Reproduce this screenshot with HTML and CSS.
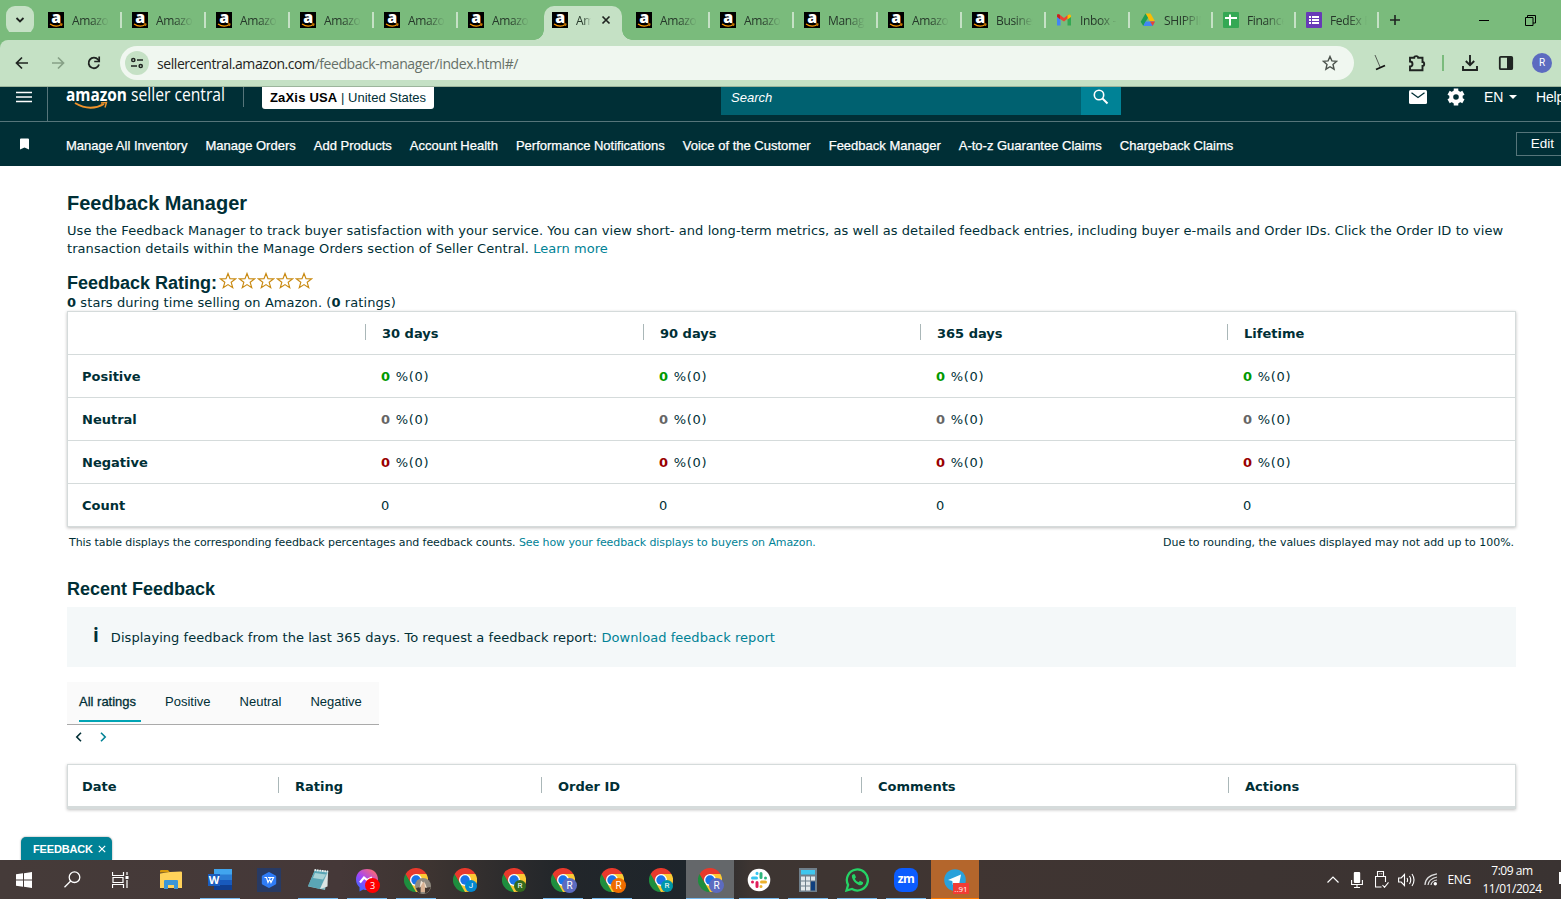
FILE: index.html
```
<!DOCTYPE html>
<html lang="en">
<head>
    <meta charset="UTF-8">
    <meta name="viewport" content="width=device-width, initial-scale=1.0">
    <title>Feedback Manager</title>
    <link rel="stylesheet" href="styles.css">
</head>
<body>

<!-- shared icons -->
<svg class="defs" width="0" height="0">
    <symbol id="amz" viewBox="0 0 16 16">
        <rect width="16" height="16" fill="#000"/>
        <text x="8" y="10.8" text-anchor="middle" font-family="Open Sans, sans-serif" font-weight="800" font-size="16" fill="#fff">a</text>
        <path d="M2 12Q8 16 13.5 12.4" fill="none" stroke="#f90" stroke-width="1.2"/>
        <path d="M11.6 11.800h2.600l-.7 2.200" fill="none" stroke="#f90" stroke-width=".8"/>
    </symbol>
    <symbol id="chrome" viewBox="0 0 24 24">
        <path d="M12 12L1.6 6A12 12 0 0 1 22.4 6z" fill="#e8392c"/>
        <path d="M12 12L22.4 6A12 12 0 0 1 12 24z" fill="#fcc934"/>
        <path d="M12 12L12 24A12 12 0 0 1 1.6 6z" fill="#1e8e3e"/>
        <path d="M12 6h10.4l-5.2 9z" fill="#fcc934"/>
        <path d="M17.2 15L12 24L8 17z" fill="#fcc934"/>
        <path d="M1.6 6L6.8 15l5.2 3V12z" fill="#1e8e3e"/>
        <path d="M1.6 6h20.8H12L6.8 15z" fill="#e8392c"/>
        <circle cx="12" cy="12" r="6" fill="#fff"/>
        <circle cx="12" cy="12" r="4.7" fill="#1a73e8"/>
    </symbol>
    <symbol id="star" viewBox="0 0 18 18">
        <path d="M9 1.500l2 5.200 5.500.2-4.300 3.400 1.500 5.400L9 12.600l-4.700 3.100 1.500-5.400L1.500 6.900 7 6.700z" fill="none" stroke="#c98a12" stroke-width="1.200"/>
    </symbol>
</svg>

<div class="tabstrip">
    <button class="tab-search"><svg width="12" height="12" viewBox="0 0 12 12"><path d="M2.5 4L6 7.5 9.5 4" fill="none" stroke="#1f2421" stroke-width="1.8"/></svg></button>
    <div class="tabs">
        <div class="tab"><svg class="fav"><use href="#amz"/></svg><span>Amazon</span></div>
        <div class="tab"><svg class="fav"><use href="#amz"/></svg><span>Amazon</span></div>
        <div class="tab"><svg class="fav"><use href="#amz"/></svg><span>Amazon</span></div>
        <div class="tab"><svg class="fav"><use href="#amz"/></svg><span>Amazon</span></div>
        <div class="tab"><svg class="fav"><use href="#amz"/></svg><span>Amazon</span></div>
        <div class="tab no-line"><svg class="fav"><use href="#amz"/></svg><span>Amazon</span></div>
        <div class="tab active"><svg class="fav"><use href="#amz"/></svg><span>Amazon</span>
            <svg class="tab-close" width="10" height="10" viewBox="0 0 10 10"><path d="M1.5 1.5l7 7m0-7l-7 7" stroke="#1f2421" stroke-width="1.7"/></svg>
        </div>
        <div class="tab"><svg class="fav"><use href="#amz"/></svg><span>Amazon</span></div>
        <div class="tab"><svg class="fav"><use href="#amz"/></svg><span>Amazon</span></div>
        <div class="tab"><svg class="fav"><use href="#amz"/></svg><span>Manage</span></div>
        <div class="tab"><svg class="fav"><use href="#amz"/></svg><span>Amazon</span></div>
        <div class="tab"><svg class="fav"><use href="#amz"/></svg><span>Business</span></div>
        <div class="tab"><svg class="fav" viewBox="0 0 16 16">
            <path d="M1 13.500V4l3.500 2.600v6.900z" fill="#4285f4"/><path d="M11.500 6.600L15 4v9.500h-3.500z" fill="#34a853"/>
            <path d="M1 5V3.500c0-1.300 1.500-1.700 2.400-1L8 6l4.600-3.500v3.300L8 9.400z" fill="#ea4335"/>
            <path d="M1 4.800V3.500c0-1.300 1.500-1.700 3-.6v4.300z" fill="#c5221f"/><path d="M11.500 3.200c1.500-1.200 3.500-1.200 3.500.8v1l-3.500 2.600z" fill="#fbbc04"/>
        </svg><span>Inbox - a</span></div>
        <div class="tab slim"><svg class="fav" viewBox="0 0 16 16">
            <path d="M5.500 1.500h5l4.500 8h-5z" fill="#fbbc04"/><path d="M5.500 1.500L8 5.800 3.300 14 .7 9.800z" fill="#1e9e54"/>
            <path d="M5.500 9.500H15L12.700 14H3.300z" fill="#4285f4"/><path d="M10 9.500h5L12.700 14z" fill="#ea4335"/>
        </svg><span>SHIPPING</span></div>
        <div class="tab slim"><svg class="fav" viewBox="0 0 16 16"><rect width="16" height="16" rx="1" fill="#34a853"/><path d="M2 6h12M7 2.500v11" stroke="#fff" stroke-width="2"/></svg><span>Finance</span></div>
        <div class="tab slim"><svg class="fav" viewBox="0 0 16 16"><rect width="16" height="16" rx="1" fill="#673ab7"/><path d="M3 5h2m1 0h7M3 8h2m1 0h7M3 11h2m1 0h7" stroke="#fff" stroke-width="1.800"/></svg><span>FedEx Re</span></div>
    </div>
    <svg class="new-tab" width="12" height="12" viewBox="0 0 12 12"><path d="M6 1v10M1 6h10" stroke="#1f2421" stroke-width="1.600"/></svg>
    <div class="win-buttons">
        <svg width="11" height="11" viewBox="0 0 11 11"><path d="M0 5.500h10" stroke="#000"/></svg>
        <svg width="11" height="11" viewBox="0 0 11 11"><path d="M.5 2.500h7.500v8H.5zM2.500 2.500v-2h8v7.500H8" fill="none" stroke="#000"/></svg>
    </div>
</div>

<div class="toolbar">
    <div class="nav-icons">
        <svg width="16" height="16" viewBox="0 0 16 16"><path d="M14 8H3m5-5.500L2.500 8 8 13.500" fill="none" stroke="#1f2421" stroke-width="1.700"/></svg>
        <svg width="16" height="16" viewBox="0 0 16 16"><path d="M2 8h11M8 2.500L13.500 8 8 13.500" fill="none" stroke="#86a086" stroke-width="1.700"/></svg>
        <svg width="16" height="16" viewBox="0 0 16 16"><path d="M13 9.500A5.300 5.300 0 1 1 12 4.500l1 1.300" fill="none" stroke="#1f2421" stroke-width="1.800"/><path d="M13.200 1.500v5h-5" fill="none" stroke="#1f2421" stroke-width="1.700"/></svg>
    </div>
    <div class="omnibox">
        <span class="site-info"><svg width="14" height="12" viewBox="0 0 14 12"><g fill="none" stroke="#1f2421" stroke-width="1.500"><circle cx="3.300" cy="3" r="1.600"/><path d="M7 3h6M1 9h6"/><circle cx="10.700" cy="9" r="1.600"/></g></svg></span>
        <span class="url">sellercentral.amazon.com<i>/feedback-manager/index.html#/</i></span>
        <svg class="bookmark" width="16" height="16" viewBox="0 0 16 16"><path d="M8 1.500l1.900 4.400 4.800.4L11 9.500l1.100 4.700L8 11.700l-4.100 2.500L5 9.500 1.300 6.300l4.800-.4z" fill="none" stroke="#4b524c" stroke-width="1.400"/></svg>
    </div>
    <div class="tools">
        <svg width="12" height="16" viewBox="0 0 12 16"><path d="M1 0l5.500 13" stroke="#555c55"/><path d="M2 14.500l9-4" stroke="#111" stroke-width="1.800"/></svg>
        <svg width="18" height="18" viewBox="0 0 18 18"><path d="M2 3.800h4.200a2 1.700 0 0 1 4 0H14.500v4.200a1.700 2 0 0 1 0 4v4.200H2V12.500a2.500 2.500 0 0 0 0-5z" fill="none" stroke="#1f2421" stroke-width="1.900"/></svg>
        <span class="tool-line"></span>
        <svg width="16" height="16" viewBox="0 0 16 16"><path d="M8 0v10M3.800 6L8 10.200 12.200 6M1 11v4h14v-4" fill="none" stroke="#1f2421" stroke-width="1.900"/></svg>
        <svg width="16" height="16" viewBox="0 0 16 16"><rect x="1.800" y="1.800" width="12.400" height="12.400" rx="1" fill="none" stroke="#1f2421" stroke-width="1.800"/><path d="M9 2h5v12H9z" fill="#1f2421"/></svg>
        <span class="avatar">R</span>
    </div>
</div>

<header class="sc-header">
    <div class="sc-menu"><svg width="16" height="12" viewBox="0 0 16 12"><path d="M0 1.500h16M0 6h16M0 10.500h16" stroke="#fff" stroke-width="1.700"/></svg></div>
    <svg class="logo" width="160" height="24" viewBox="0 0 160 24">
        <text x="0" y="14.3" textLength="61" lengthAdjust="spacingAndGlyphs" font-family="Open Sans, sans-serif" font-weight="700" font-size="18.500" fill="#fff">amazon</text>
        <text x="65" y="14" textLength="94" lengthAdjust="spacingAndGlyphs" font-family="Open Sans, sans-serif" font-size="18.500" fill="#fff">seller central</text>
        <path d="M9 16q15 9 29 1" fill="none" stroke="#f0932b" stroke-width="2"/>
        <path d="M35 16l5.500-.5-1.500 5" fill="none" stroke="#f0932b" stroke-width="1.400"/>
    </svg>
    <span class="logo-line"></span>
    <div class="account"><b>ZaXis USA</b> | United States</div>
    <div class="search"><span>Search</span></div>
    <div class="search-btn"><svg width="16" height="16" viewBox="0 0 16 16"><circle cx="6" cy="6" r="4.700" fill="none" stroke="#fff" stroke-width="1.600"/><path d="M9.500 9.500l5 5" stroke="#fff" stroke-width="1.900"/></svg></div>
    <div class="sc-right">
        <svg width="18" height="14" viewBox="0 0 18 14"><rect width="18" height="14" rx="1.500" fill="#fff"/><path d="M2.500 2.800L9 7.500l6.500-4.700" fill="none" stroke="#002f36" stroke-width="1.300"/></svg>
        <svg width="18" height="18" viewBox="0 0 18 18"><circle cx="9" cy="9" r="4.800" fill="none" stroke="#fff" stroke-width="4"/><g stroke="#fff" stroke-width="4.500"><path d="M9 .5v3M9 14.500v3M1.600 4.800l2.700 1.500M13.700 11.700l2.700 1.500M1.600 13.200l2.700-1.500M13.700 6.300l2.700-1.500"/></g></svg>
        <span class="lang">EN <i></i></span>
        <span>Help</span>
    </div>
</header>

<nav class="favorites">
    <div class="fav-mark"><svg width="9" height="12" viewBox="0 0 9 12"><path d="M0 1.500Q0 .5 1 .5h7q1 0 1 1V11.500L4.500 9.500 0 11.500z" fill="#fff"/></svg></div>
    <a>Manage All Inventory</a>
    <a>Manage Orders</a>
    <a>Add Products</a>
    <a>Account Health</a>
    <a>Performance Notifications</a>
    <a>Voice of the Customer</a>
    <a>Feedback Manager</a>
    <a>A-to-z Guarantee Claims</a>
    <a>Chargeback Claims</a>
    <button class="edit">Edit</button>
</nav>

<main>
    <h1>Feedback Manager</h1>
    <p class="intro">Use the Feedback Manager to track buyer satisfaction with your service. You can view short- and long-term metrics, as well as detailed feedback entries, including buyer e-mails and Order IDs. Click the Order ID to view<br>transaction details within the Manage Orders section of Seller Central. <a>Learn more</a></p>

    <div class="rating">
        <h2>Feedback Rating:</h2>
        <div class="stars">
            <svg><use href="#star"/></svg><svg><use href="#star"/></svg><svg><use href="#star"/></svg><svg><use href="#star"/></svg><svg><use href="#star"/></svg>
        </div>
    </div>
    <p class="summary"><b>0</b> stars during time selling on Amazon. (<b>0</b> ratings)</p>

    <div class="table metrics">
        <div class="row head"><span></span><span>30 days</span><span>90 days</span><span>365 days</span><span>Lifetime</span></div>
        <div class="row pos"><b>Positive</b><span><b>0</b> %(0)</span><span><b>0</b> %(0)</span><span><b>0</b> %(0)</span><span><b>0</b> %(0)</span></div>
        <div class="row neu"><b>Neutral</b><span><b>0</b> %(0)</span><span><b>0</b> %(0)</span><span><b>0</b> %(0)</span><span><b>0</b> %(0)</span></div>
        <div class="row neg"><b>Negative</b><span><b>0</b> %(0)</span><span><b>0</b> %(0)</span><span><b>0</b> %(0)</span><span><b>0</b> %(0)</span></div>
        <div class="row"><b>Count</b><span>0</span><span>0</span><span>0</span><span>0</span></div>
    </div>
    <div class="notes">
        <span>This table displays the corresponding feedback percentages and feedback counts. <a>See how your feedback displays to buyers on Amazon.</a></span>
        <span class="rounding">Due to rounding, the values displayed may not add up to 100%.</span>
    </div>

    <h2 class="recent">Recent Feedback</h2>
    <div class="info"><b>i</b><span>Displaying feedback from the last 365 days. To request a feedback report: <a>Download feedback report</a></span></div>

    <div class="filters">
        <span class="on">All ratings</span><span>Positive</span><span>Neutral</span><span>Negative</span>
    </div>
    <div class="pager">
        <svg width="8" height="10" viewBox="0 0 8 10"><path d="M6 .8L1.800 5 6 9.200" fill="none" stroke="#002f36" stroke-width="1.600"/></svg>
        <svg width="8" height="10" viewBox="0 0 8 10"><path d="M2 .8L6.200 5 2 9.200" fill="none" stroke="#008296" stroke-width="1.600"/></svg>
    </div>

    <div class="table list">
        <div class="row head"><span>Date</span><span>Rating</span><span>Order ID</span><span>Comments</span><span>Actions</span></div>
    </div>

    <div class="feedback-tab">FEEDBACK <svg width="8" height="8" viewBox="0 0 8 8"><path d="M.8.8l6.400 6.400m0-6.400L.8 7.200" stroke="#fff" stroke-width="1.200"/></svg></div>
</main>

<footer class="taskbar">
    <div class="sys">
        <div class="app"><svg width="16" height="16" viewBox="0 0 16 16"><path d="M0 2.300L7 1.300V7.500H0zM8 1.200L16 0v7.500H8zM0 8.500h7v6.200l-7-1zM8 8.500h8V16l-8-1.200z" fill="#fff"/></svg></div>
        <div class="app"><svg width="17" height="17" viewBox="0 0 17 17"><circle cx="10.500" cy="6.200" r="5.300" fill="none" stroke="#fff" stroke-width="1.300"/><path d="M6.700 10L.5 16.300" stroke="#fff" stroke-width="1.300"/></svg></div>
        <div class="app"><svg width="17" height="16" viewBox="0 0 17 16"><path d="M.5 0v3.500h11V0M.5 16v-3.500h11V16M1 5.500h10v5H1zM15 0v3M15 8v8" fill="none" stroke="#fff" stroke-width="1.200"/><path d="M13.500 4h3v3h-3z" fill="#fff"/></svg></div>
    </div>
    <div class="apps">
        <div class="app"><svg width="22" height="19" viewBox="0 0 22 19"><path d="M0 1q0-1 1-1h7l2 2.500H0z" fill="#d99a0b"/><path d="M0 3.500L10 2l11-.5q1 0 1 1V18H0z" fill="#ffd25a"/><path d="M4 19v-8q0-1 1-1h12q1 0 1 1v8h-4v-4H8v4z" fill="#3b96d8"/></svg></div>
        <div class="app open"><svg width="24" height="22" viewBox="0 0 24 22"><path d="M6 0h18v6H6z" fill="#41a5ee"/><path d="M6 5.500h18V11H6z" fill="#2b7cd3"/><path d="M6 11h18v5.500H6z" fill="#185abd"/><path d="M6 16h18v5H6z" fill="#103f91"/><rect y="5" width="12" height="12" fill="#1b5dbe"/><text x="6" y="14.800" text-anchor="middle" font-family="Open Sans, sans-serif" font-weight="700" font-size="11" fill="#fff">W</text></svg></div>
        <div class="app"><svg width="24" height="24" viewBox="0 0 24 24"><rect width="24" height="24" fill="#283a63"/><path d="M12 5.200l6 3.400v6.800l-6 3.400-6-3.400V8.600z" fill="#2f7cf6" stroke="#2f7cf6" stroke-width="2.400" stroke-linejoin="round"/><path d="M7.500 9.500h2l1.500 5 2.500-5M11 9.500h5.500l-2.500 5-1.500-4" fill="none" stroke="#fff" stroke-width="1.200"/></svg></div>
        <div class="app open"><svg width="24" height="24" viewBox="0 0 24 24"><path d="M9 1.500L22.500 3 19 22 2 18.500z" fill="#88bdc5"/><path d="M8.500 3L21 4.500 14 21 2 18z" fill="#5aa5b5"/><path d="M14 21l7.500-2.500L22 4z" fill="#dce4e3"/><path d="M8.500 2l13.500 1.500" stroke="#eee" stroke-width="1.800" stroke-dasharray="1.500 1"/><path d="M9 5l11 1.500-3 5-10-1.500z" fill="#a8d2d6"/></svg></div>
        <div class="app open"><svg width="24" height="24" viewBox="0 0 24 24"><defs><linearGradient id="msg" x1="0" y1="1" x2=".8" y2="0"><stop offset="0" stop-color="#1877ff"/><stop offset=".5" stop-color="#a044fa"/><stop offset="1" stop-color="#ff6a70"/></linearGradient></defs><path d="M12 1C5 1 1 5.800 1 11.500c0 3.500 1.500 6 3.500 7.800V23.500l3.700-2q2 .5 3.800.5c7 0 11-4.800 11-10.500S19 1 12 1z" fill="url(#msg)"/><path d="M5 14.500l4-5 3 2.500 5-2.500" fill="none" stroke="#fff" stroke-width="2.200"/></svg><span class="count">3</span></div>
        <div class="app open"><svg class="big"><use href="#chrome"/></svg><svg class="photo" width="16" height="16" viewBox="0 0 16 16"><circle cx="8" cy="8" r="8" fill="#8f8a80"/><path d="M5.500 14V6Q8 2 10.500 6v8z" fill="#d9b394"/><path d="M1 10l4.500-1v6.500q-3-1-4.500-5.500zM10 10l5.500-1q-1 5-5.500 6.500z" fill="#423730"/><path d="M6 2.500l2 2-3.500 6zM9 3l3 7-2-1z" fill="#eee2d2"/></svg></div>
        <div class="app"><svg class="big"><use href="#chrome"/></svg><span class="who blue">J</span></div>
        <div class="app"><svg class="big"><use href="#chrome"/></svg><span class="who green">R</span></div>
        <div class="app open"><svg class="big"><use href="#chrome"/></svg><span class="who large indigo">R</span></div>
        <div class="app open"><svg class="big"><use href="#chrome"/></svg><span class="who large orange">R</span></div>
        <div class="app"><svg class="big"><use href="#chrome"/></svg><span class="who teal">R</span></div>
        <div class="app open current"><svg class="big"><use href="#chrome"/></svg><span class="who large indigo">R</span></div>
        <div class="app open"><svg width="24" height="24" viewBox="0 0 24 24"><circle cx="12" cy="12" r="11.300" fill="#fff"/><g fill="none" stroke-width="3" stroke-linecap="round"><path d="M5.500 10h4M10 5.300v.1" stroke="#36c5f0"/><path d="M14 5.500v4M18.500 10v.1" stroke="#2eb67d"/><path d="M14.500 14h4M14 18.500v.1" stroke="#ecb22e"/><path d="M10 14.500v4M5.500 14v.1" stroke="#e01e5a"/></g></svg></div>
        <div class="app open"><svg width="18" height="24" viewBox="0 0 18 24"><rect width="18" height="24" fill="#6f7f8b"/><path d="M2 2h14v4.500H2z" fill="#3fc6ee"/><path d="M2 8.500h4v4H2zM7 8.500h4v4H7zM12 8.500h4v4h-4zM2 13.500h4v4H2zM7 13.500h4v4H7zM2 18.500h4v4H2zM7 18.500h4v4H7z" fill="#e4e8eb"/><path d="M12 13.500h4v9h-4z" fill="#0e3f7e"/></svg></div>
        <div class="app open"><svg width="24" height="24" viewBox="0 0 24 24"><path d="M1.500 22.500l1.600-5.600A10.500 10.500 0 1 1 7 21z" fill="none" stroke="#25d366" stroke-width="2.300"/><path d="M8 6.200q-1.700 1-1 3.300 1.500 5 6.700 7.500 3 1 4.300-1.300v-1.500L15 12.700l-1.500 1.600q-2.500-1-3.700-3.600L11 9.300 9.700 6.300z" fill="#25d366"/></svg></div>
        <div class="app open"><span class="zoom">zm</span></div>
        <div class="app open alert"><svg width="22" height="22" viewBox="0 0 22 22"><circle cx="11" cy="11" r="10.800" fill="#2aa1da"/><path d="M4 11L17 5.500 14.800 17l-4-3-2 2-.5-4z" fill="#fff"/></svg><span class="unread">..91</span></div>
    </div>
    <div class="tray">
        <svg width="12" height="8" viewBox="0 0 12 8"><path d="M.5 6.500L6 1l5.500 5.500" fill="none" stroke="#fff" stroke-width="1.200"/></svg>
        <svg width="12" height="16" viewBox="0 0 12 16"><rect x="2.800" y="0" width="6.400" height="11" rx="1" fill="#fff"/><path d="M.6 8v4.500h10.800V8M6 12.500V16M3 15.500h6" fill="none" stroke="#fff" stroke-width="1.100"/></svg>
        <svg width="14" height="17" viewBox="0 0 14 17"><path d="M2.500 5.500V.5h6v5M10.500 11V5.500H.5V16h6M4.500 2.800h.8m1 0h.8M7.500 14l2 2.300 4-5" fill="none" stroke="#fff" stroke-width="1.100"/></svg>
        <svg width="17" height="14" viewBox="0 0 17 14"><path d="M.6 5h2.600L6.500 1.500v11L3.200 9H.6zM9 5q1.200 2 0 4M11.500 3q2.500 4 0 8M14 1q4 6 0 12" fill="none" stroke="#fff" stroke-width="1.100"/></svg>
        <svg width="14" height="13" viewBox="0 0 14 13"><path d="M1 12Q1 3 13 .8M4 12q.500-6 9-8M7 12q.5-4 6-5" fill="none" stroke="#ddd" stroke-width="1.200"/><circle cx="11.300" cy="10.800" r="1.700" fill="#fff"/></svg>
        <span>ENG</span>
        <div class="clock"><span>7:09 am</span><span>11/01/2024</span></div>
        <i class="edge"></i>
    </div>
</footer>

</body>
</html>
```
FILE: styles.css
```
* {
    box-sizing: border-box;
}
body {
    margin: 0;
    width: 1561px;
    height: 899px;
    overflow: hidden;
    display: flex;
    flex-direction: column;
    background: #fff;
    color: #002f36;
    font-family: "DejaVu Sans", sans-serif;
    font-size: 13px;
}
h1, h2, p {
    margin: 0;
}
a {
    color: #008296;
}
svg {
    flex: none;
    display: block;
}
button {
    padding: 0;
    border: 0;
}
.defs {
    position: absolute;
}

/* browser tabs */
.tabstrip {
    height: 40px;
    flex: none;
    display: flex;
    align-items: center;
    background: #7abb7c;
    font-family: "Open Sans", sans-serif;
    font-size: 12px;
    letter-spacing: -0.35px;
    color: #26382a;
}
.tab-search {
    width: 28px;
    height: 28px;
    margin: 0 6px;
    border-radius: 9px;
    background: #c5e1c5;
    display: flex;
    align-items: center;
    justify-content: center;
}
.tabs {
    display: flex;
}
.tab {
    position: relative;
    width: 84px;
    height: 40px;
    padding-left: 8px;
    display: flex;
    align-items: center;
    gap: 8px;
}
.tab.slim {
    width: 83px;
}
.tab span {
    width: 37px;
    overflow: hidden;
    white-space: nowrap;
    -webkit-mask-image: linear-gradient(to right, #000 50%, transparent);
    mask-image: linear-gradient(to right, #000 50%, transparent);
}
.tab::after {
    content: "";
    position: absolute;
    right: 2px;
    top: 12px;
    width: 2px;
    height: 16px;
    background: #c5e1c5;
}
.tab.no-line::after {
    display: none;
}
.fav {
    width: 16px;
    height: 16px;
}
.tab.active::before {
    content: "";
    position: absolute;
    left: 0;
    top: 6px;
    width: 78px;
    height: 34px;
    border-radius: 10px 10px 0 0;
    background: #c5e1c5;
}
.tab.active::after {
    right: auto;
    left: -10px;
    top: 30px;
    width: 98px;
    height: 10px;
    background:
        radial-gradient(circle at 0 0, transparent 9.5px, #c5e1c5 10px) left / 10px 10px no-repeat,
        radial-gradient(circle at 100% 0, transparent 9.5px, #c5e1c5 10px) right / 10px 10px no-repeat;
}
.tab.active > * {
    position: relative;
}
.tab.active span {
    width: 15px;
}
.tab-close {
    margin-left: 2px;
}
.new-tab {
    margin-left: 8px;
}
.win-buttons {
    margin-left: auto;
    margin-right: 25px;
    display: flex;
    gap: 35px;
}

/* toolbar */
.toolbar {
    height: 47px;
    flex: none;
    display: flex;
    align-items: center;
    background: #c5e1c5;
    border-bottom: 1px solid #9cb59c;
    border-radius: 8px 0 0 0;
    box-shadow: -8px -8px 0 #7abb7c;
}
.nav-icons {
    display: flex;
    gap: 20px;
    padding: 0 18px 0 14px;
}
.omnibox {
    width: 1234px;
    height: 34px;
    border-radius: 17px;
    background: #f0f7f0;
    display: flex;
    align-items: center;
    padding: 0 16px 0 5px;
}
.site-info {
    width: 24px;
    height: 24px;
    border-radius: 50%;
    background: #c5e1c5;
    display: flex;
    align-items: center;
    justify-content: center;
}
.url {
    margin-left: 8px;
    font: 14px "Open Sans", sans-serif;
    letter-spacing: -0.43px;
    color: #1f2421;
}
.url i {
    font-style: normal;
    color: #667068;
}
.bookmark {
    margin-left: auto;
}
.tools {
    display: flex;
    align-items: center;
    padding-left: 20px;
}
.tools svg:nth-child(2) {
    margin-left: 22px;
}
.tool-line {
    width: 2px;
    height: 16px;
    margin: 0 18px 0 16px;
    background: #7abb7c;
}
.tools svg:nth-child(5) {
    margin-left: 20px;
}
.avatar {
    width: 20px;
    height: 20px;
    margin-left: 18px;
    border-radius: 50%;
    background: #5c6bc0;
    color: #fff;
    font: 10px/20px Roboto, sans-serif;
    text-align: center;
}

/* seller central header */
.sc-header {
    height: 35px;
    flex: none;
    display: flex;
    background: #002f36;
    border-bottom: 1px solid #56757a;
    color: #fff;
    font-family: "Liberation Sans", sans-serif;
    overflow: hidden;
}
.sc-header > * {
    flex: none;
}
.sc-menu {
    width: 48px;
    padding: 4px 0 0 16px;
    border-right: 1px solid #56757a;
}
.logo {
    margin-left: 18px;
}
.logo-line {
    width: 1px;
    height: 20px;
    margin-left: 17px;
    background: #56757a;
}
.account {
    width: 172px;
    height: 22px;
    margin-left: 18px;
    border-radius: 0 0 3px 3px;
    background: #fff;
    color: #002f36;
    font-size: 13px;
    line-height: 21px;
    text-align: center;
    white-space: nowrap;
}
.account b {
    color: #000;
    letter-spacing: 0.2px;
}
.search {
    width: 360px;
    height: 28px;
    margin-left: 287px;
    padding-left: 10px;
    background: #006170;
    font-size: 13px;
    font-style: italic;
    line-height: 21px;
}
.search-btn {
    width: 40px;
    height: 28px;
    padding: 2px 0 0 12px;
    background: #008296;
}
.sc-right {
    margin-left: 288px;
    height: 20px;
    display: flex;
    align-items: center;
    font-size: 14px;
    letter-spacing: -0.2px;
    white-space: nowrap;
}
.sc-right svg + svg {
    margin-left: 20px;
}
.lang {
    display: flex;
    align-items: center;
    margin: 0 19px 0 19px;
}
.lang i {
    margin-left: 6px;
    border: 4px solid transparent;
    border-top-color: #fff;
    border-bottom: 0;
}
.favorites {
    height: 44px;
    flex: none;
    display: flex;
    align-items: center;
    gap: 18px;
    padding-bottom: 1px;
    background: #002f36;
    font-family: "Liberation Sans", sans-serif;
    font-size: 13px;
    white-space: nowrap;
    overflow: hidden;
}
.favorites a {
    margin-top: 4px;
    color: #fff;
    -webkit-text-stroke: 0.25px #fff;
}
.fav-mark {
    width: 48px;
    padding-left: 20px;
}
.edit {
    width: 60px;
    height: 24px;
    flex: none;
    margin-left: auto;
    margin-right: -15px;
    padding-right: 7px;
    border: 1px solid #56757a;
    background: none;
    color: #fff;
    font: 13.5px "Liberation Sans", sans-serif;
}

/* page */
main {
    position: relative;
    flex: 1;
    padding: 25px 45px 0 67px;
}
h1, h2 {
    font-family: "Liberation Sans", sans-serif;
    font-weight: bold;
}
h1 {
    font-size: 20px;
    line-height: 24px;
}
h2 {
    font-size: 18px;
    line-height: 22px;
}
.intro {
    margin-top: 7px;
    line-height: 18px;
    letter-spacing: 0.06px;
    white-space: nowrap;
}
.rating {
    display: flex;
    margin-top: 13px;
    height: 24px;
}
.rating h2 {
    padding-top: 1px;
}
.stars {
    display: flex;
    gap: 1px;
    margin-left: 2px;
}
.stars svg {
    width: 18px;
    height: 18px;
    margin-top: 1px;
}
.summary {
    line-height: 16px;
    letter-spacing: 0.08px;
}
.table {
    border: 1px solid #d5dbdb;
    box-shadow: 0 1px 3px rgba(0, 0, 0, 0.25);
    background: #fff;
}
.metrics {
    height: 216px;
}
.row {
    display: grid;
    grid-template-columns: 297px 278px 277px 307px 1fr;
    height: 43px;
    align-items: center;
    border-bottom: 1px solid #d5dbdb;
}
.row:last-child {
    border-bottom: 0;
}
.row > :first-child {
    padding-left: 14px;
}
.row > :not(:first-child) {
    padding-left: 16px;
}
.head {
    font-weight: bold;
}
.head > :not(:first-child) {
    height: 16px;
    line-height: 20px;
    margin-top: -2px;
    border-left: 1px solid #aab7b8;
}
.pos span, .neu span, .neg span {
    letter-spacing: 0.75px;
}
.pos span b {
    color: #090;
}
.neu span b {
    color: #666;
}
.neg span b {
    color: #900;
}
.notes {
    display: flex;
    justify-content: space-between;
    padding: 9px 2px 0;
    font-size: 11px;
    line-height: 14px;
    letter-spacing: -0.09px;
}
.notes .rounding {
    letter-spacing: -0.04px;
}
.recent {
    margin-top: 28px;
}
.info {
    height: 60px;
    margin-top: 7px;
    padding-left: 26px;
    display: flex;
    align-items: center;
    background: #f4f8f9;
    letter-spacing: 0.05px;
}
.info b {
    margin-right: 12px;
    margin-top: -4px;
    font-size: 19px;
    line-height: 18px;
    font-family: "Open Sans", sans-serif;
    font-weight: 700;
}
.filters {
    width: 312px;
    height: 43px;
    margin-top: 15px;
    padding-left: 12px;
    display: flex;
    gap: 29px;
    background: #fafafa;
    border-bottom: 1px solid #aaa;
    font-family: "Liberation Sans", sans-serif;
    font-size: 13px;
    line-height: 39px;
    white-space: nowrap;
}
.filters .on {
    width: 62px;
    height: 40px;
    margin-right: -5px;
    border-bottom: 2px solid #00a4b4;
    -webkit-text-stroke: 0.3px #002f36;
}
.pager {
    display: flex;
    gap: 16px;
    padding: 7px 8px;
}
.list {
    height: 45px;
    margin-top: 15px;
    border-bottom: 3px solid #d5dbdb;
}
.list .row {
    grid-template-columns: 210px 263px 320px 367px 1fr;
}
.list .row > :not(:first-child) {
    margin-top: -3px;
}
.feedback-tab {
    position: absolute;
    left: 21px;
    bottom: 0;
    width: 91px;
    height: 23px;
    padding-left: 12px;
    display: flex;
    align-items: center;
    gap: 5px;
    border-radius: 5px 5px 0 0;
    background: #008296;
    box-shadow: 0 0 2px #888;
    color: #fff;
    font: bold 11px "Liberation Sans", sans-serif;
    letter-spacing: -0.15px;
}

/* windows taskbar */
.taskbar {
    position: relative;
    height: 39px;
    flex: none;
    display: flex;
    background: linear-gradient(to right, #453b39 0, #453838 340px, #3d3431 430px, #22262a 560px, #1e252b 690px, #3d3532 750px, #403532 960px, #3a3332 1561px);
    color: #fff;
}
.sys {
    display: flex;
    margin-right: 3px;
}
.apps {
    display: flex;
    gap: 1px;
}
.app {
    position: relative;
    width: 48px;
    height: 39px;
    display: flex;
    align-items: center;
    justify-content: center;
}
.open::after {
    content: "";
    position: absolute;
    left: 4px;
    right: 4px;
    bottom: 0;
    height: 1px;
    background: #76b9ed;
}
.current {
    background: #64676a;
}
.alert {
    background: #b4662c;
}
.current::after, .alert::after {
    left: 0;
    right: 0;
}
.alert::after {
    background: #ff7a00;
}
.big {
    width: 24px;
    height: 24px;
    margin-top: 1px;
}
.who {
    position: absolute;
    left: 24px;
    top: 20px;
    width: 12px;
    height: 12px;
    border-radius: 50%;
    font: 8px/12px Roboto, sans-serif;
    text-align: center;
}
.who.large {
    left: 23px;
    top: 18px;
    width: 15px;
    height: 15px;
    font-size: 10px;
    line-height: 15px;
}
.blue { background: #0288d1; }
.green { background: #33691e; }
.indigo { background: #5c6bc0; }
.orange { background: #ef6c00; }
.teal { background: #0097a7; }
.photo {
    position: absolute;
    left: 23px;
    top: 18px;
}
.count {
    position: absolute;
    left: 22px;
    top: 18px;
    width: 15px;
    height: 15px;
    border-radius: 50%;
    background: #f00;
    font: 9px/15px "Open Sans", sans-serif;
    text-align: center;
}
.zoom {
    width: 24px;
    height: 24px;
    border-radius: 8px;
    background: #0b5cff;
    font: bold 12px/21px "Open Sans", sans-serif;
    text-align: center;
    letter-spacing: -0.5px;
}
.unread {
    position: absolute;
    left: 22px;
    top: 23px;
    width: 16px;
    height: 11px;
    background: #f23c34;
    font: 8px/11px "Open Sans", sans-serif;
    text-align: center;
}
.tray {
    margin-left: auto;
    display: flex;
    align-items: center;
    font: 12px "Open Sans", sans-serif;
    letter-spacing: -0.3px;
}
.tray svg {
    margin-right: 12px;
}
.tray svg:nth-child(3), .tray svg:nth-child(4), .tray svg:nth-child(5) {
    margin-right: 9px;
}
.clock {
    width: 62px;
    margin-left: 10px;
    display: flex;
    flex-direction: column;
    line-height: 18px;
    text-align: center;
    letter-spacing: -0.45px;
}
.edge {
    width: 2px;
    height: 12px;
    margin: -3px 0 0 16px;
    background: #fff;
}
```
